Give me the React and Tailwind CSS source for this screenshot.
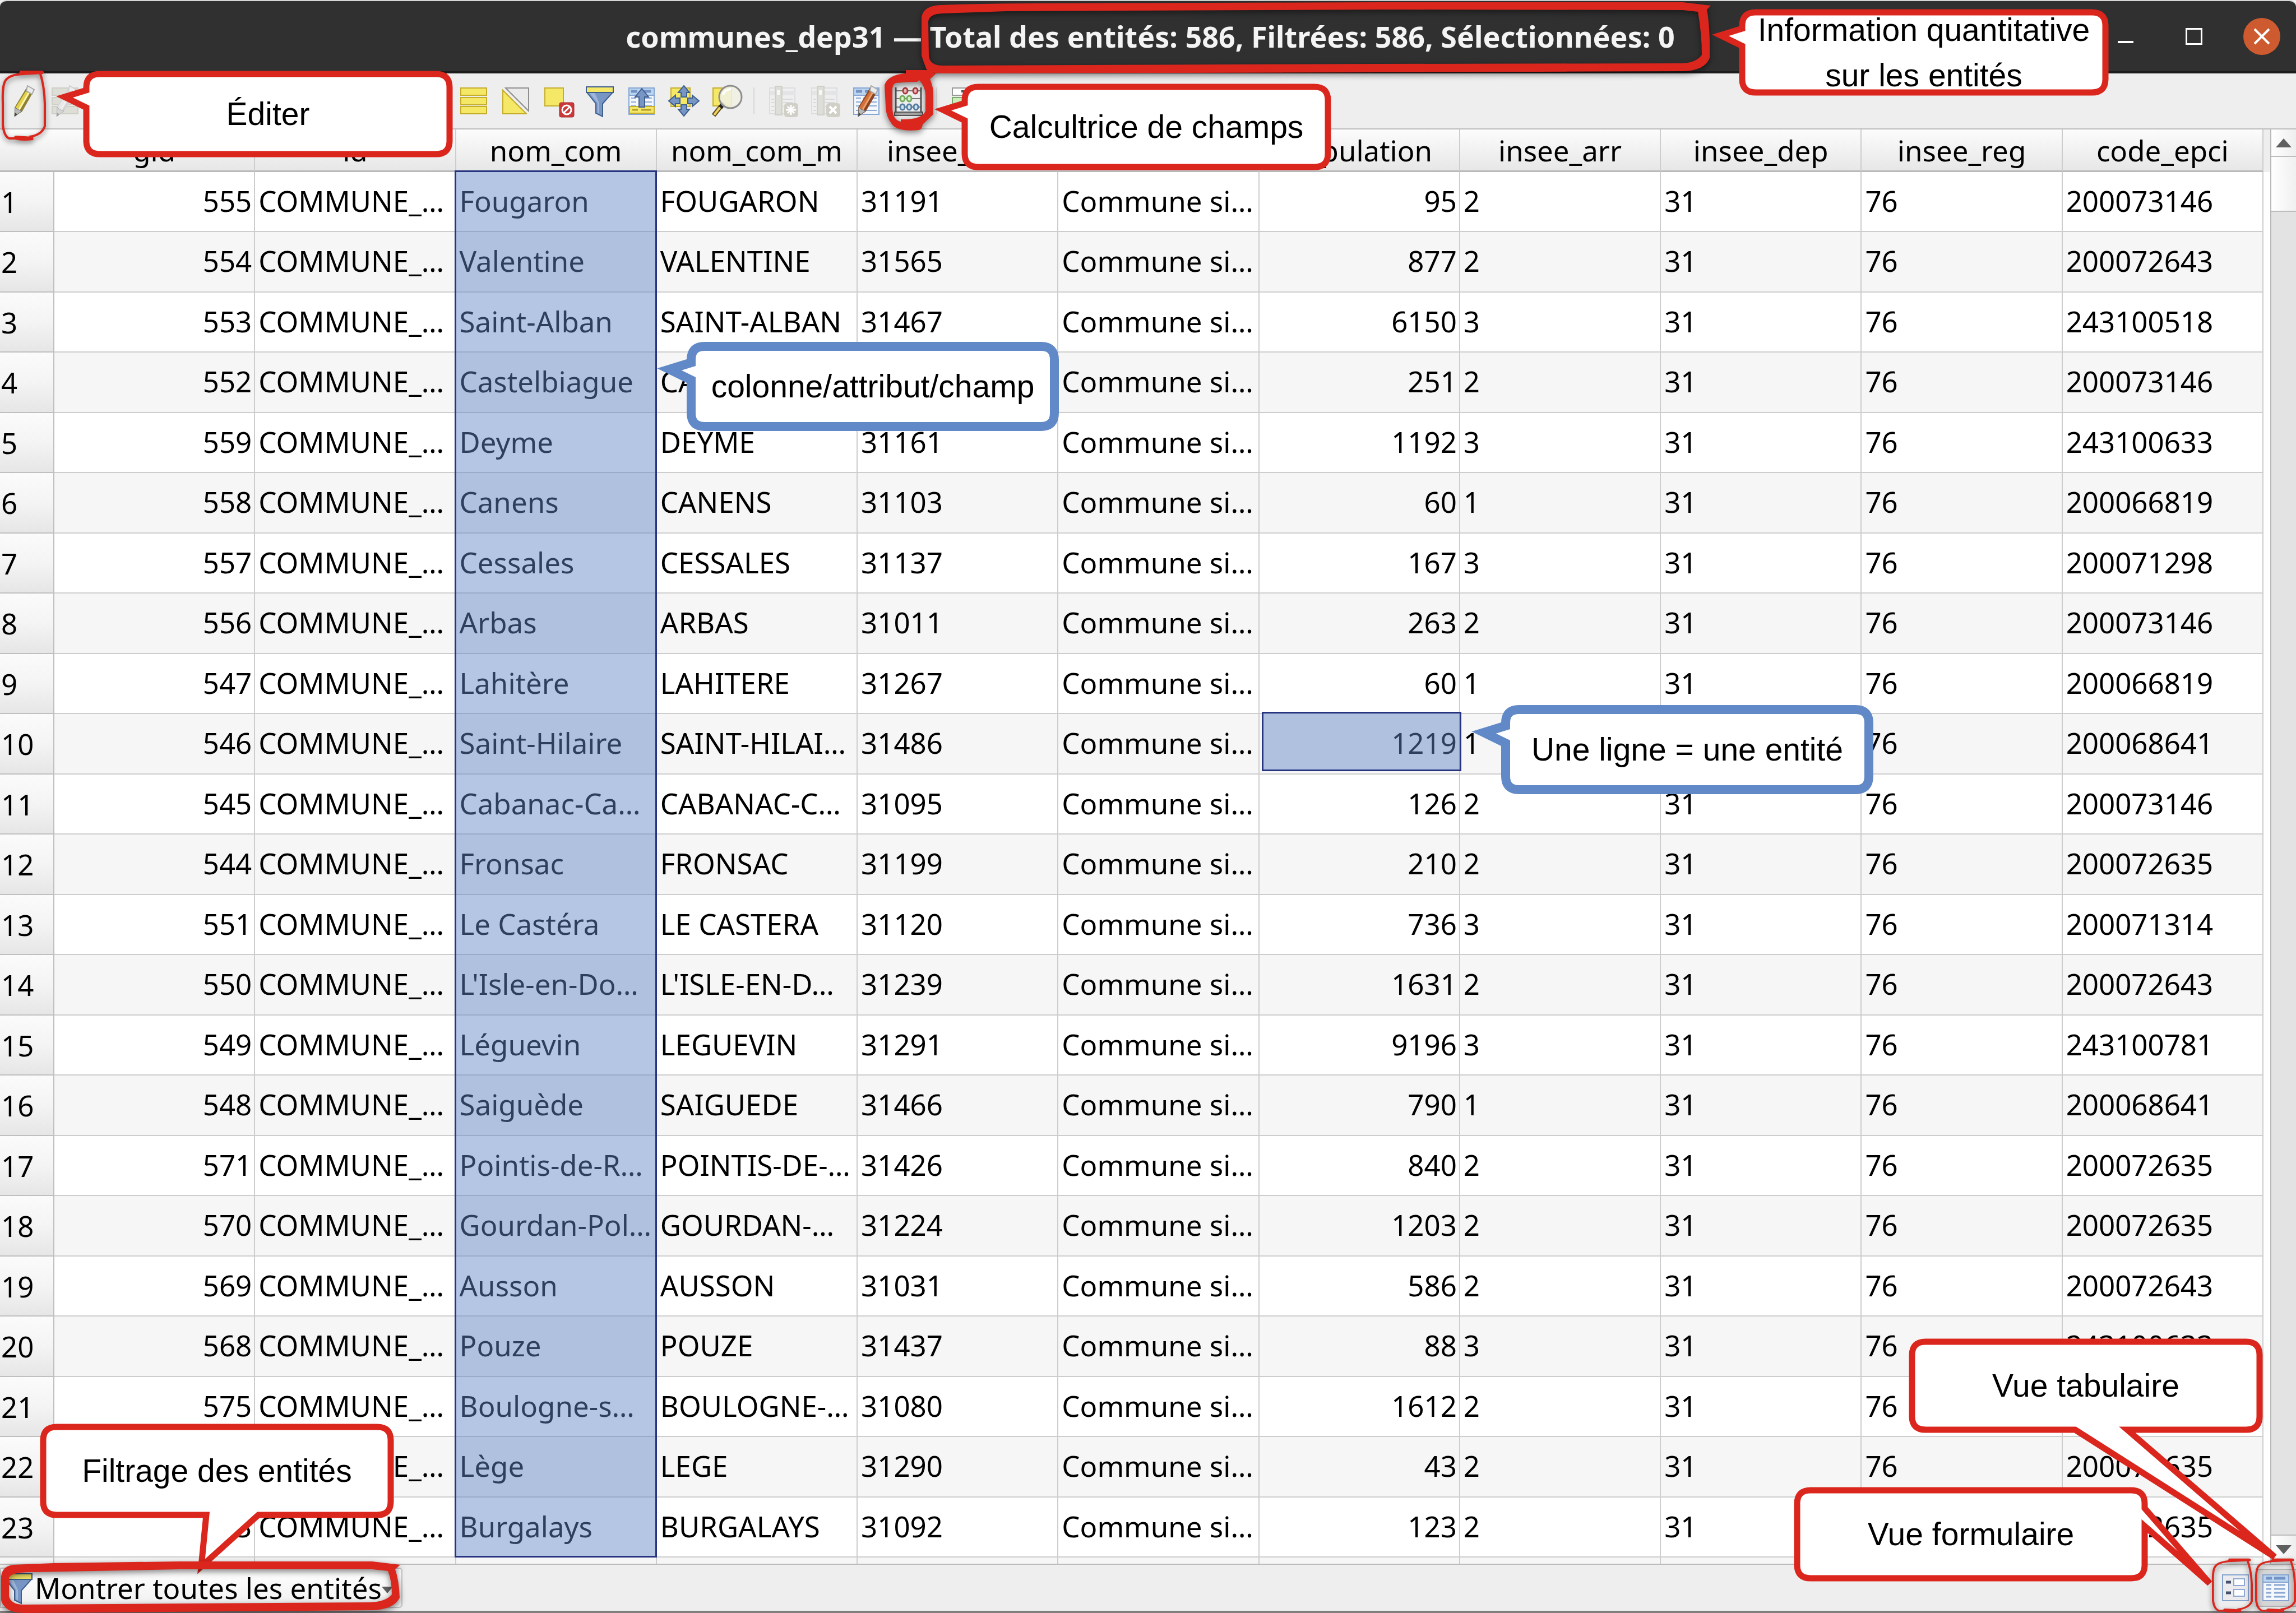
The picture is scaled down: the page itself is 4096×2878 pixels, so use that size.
const COLUMNS = [
  "gid",
  "id",
  "nom_com",
  "nom_com_m",
  "insee_com",
  "statut",
  "population",
  "insee_arr",
  "insee_dep",
  "insee_reg",
  "code_epci",
];

// gid, nom_com, nom_com_m, insee_com, population, insee_arr, code_epci
const ROWS = [
  [555, "Fougaron", "FOUGARON", "31191", 95, "2", "200073146"],
  [554, "Valentine", "VALENTINE", "31565", 877, "2", "200072643"],
  [553, "Saint-Alban", "SAINT-ALBAN", "31467", 6150, "3", "243100518"],
  [552, "Castelbiague", "CASTELBIA…", "31114", 251, "2", "200073146"],
  [559, "Deyme", "DEYME", "31161", 1192, "3", "243100633"],
  [558, "Canens", "CANENS", "31103", 60, "1", "200066819"],
  [557, "Cessales", "CESSALES", "31137", 167, "3", "200071298"],
  [556, "Arbas", "ARBAS", "31011", 263, "2", "200073146"],
  [547, "Lahitère", "LAHITERE", "31267", 60, "1", "200066819"],
  [546, "Saint-Hilaire", "SAINT-HILAI…", "31486", 1219, "1", "200068641"],
  [545, "Cabanac-Ca…", "CABANAC-C…", "31095", 126, "2", "200073146"],
  [544, "Fronsac", "FRONSAC", "31199", 210, "2", "200072635"],
  [551, "Le Castéra", "LE CASTERA", "31120", 736, "3", "200071314"],
  [550, "L'Isle-en-Do…", "L'ISLE-EN-D…", "31239", 1631, "2", "200072643"],
  [549, "Léguevin", "LEGUEVIN", "31291", 9196, "3", "243100781"],
  [548, "Saiguède", "SAIGUEDE", "31466", 790, "1", "200068641"],
  [571, "Pointis-de-R…", "POINTIS-DE-…", "31426", 840, "2", "200072635"],
  [570, "Gourdan-Pol…", "GOURDAN-…", "31224", 1203, "2", "200072635"],
  [569, "Ausson", "AUSSON", "31031", 586, "2", "200072643"],
  [568, "Pouze", "POUZE", "31437", 88, "3", "243100633"],
  [575, "Boulogne-s…", "BOULOGNE-…", "31080", 1612, "2", "200072635"],
  [574, "Lège", "LEGE", "31290", 43, "2", "200072635"],
  [573, "Burgalays", "BURGALAYS", "31092", 123, "2", "200072635"],
];

const YELLOW = "#f5e867";
const GOLD = "#c5ad2c";
const BLUE = "#7796c4";
const NAVY = "#3f5f8f";

function Icon({ children, className = "" }) {
  return (
    <svg viewBox="0 0 54 54" className={"size-[54px] shrink-0 overflow-visible " + className} aria-hidden="true">
      {children}
    </svg>
  );
}

function TableSheet() {
  return (
    <g>
      <rect x="4" y="4" width="45" height="47" fill="#f4f8fd" stroke="#86a6d6" strokeWidth="2" />
      <rect x="5" y="5" width="43" height="11" fill="#bcd5ef" />
      <path d="M8 10h11M24 10h19" stroke="#7393c6" strokeWidth="5" />
      <path d="M4 17h45" stroke="#86a6d6" strokeWidth="2" />
      <path d="M8 22h9M21 22h24M8 29h9M21 29h24M8 36h9M21 36h24M8 44h9M21 44h24" stroke="#8aa7d2" strokeWidth="2" />
    </g>
  );
}

function Pencil({ body, dark, light }) {
  return (
    <g>
      <path d="M34 3L46 9L25 46L12 54L13 38Z" fill={dark} stroke={dark} strokeWidth="1" />
      <path d="M32 10L39 13L20 44L13 40Z" fill={body} />
      <path d="M36 12L39 13L21 44L18 43Z" fill={light} />
      <path d="M33 9L35 0L47 7L43 15Z" fill="#ececec" stroke="#a9a9a9" strokeWidth="2" />
      <path d="M13 38L17 42L25 45L12 55Z" fill="#b9b9b9" stroke="#6d6d6d" strokeWidth="1" />
      <path d="M12 55L13 48L17 51Z" fill="#444" />
    </g>
  );
}

function EditIcon() {
  return (
    <Icon>
      <Pencil body="#e3d14a" dark="#8f8030" light="#fbf6ae" />
    </Icon>
  );
}

function SaveEditsIcon() {
  return (
    <Icon>
      <g opacity="0.45">
        <path d="M4 4h46v13H4zM4 21h46v13H4zM4 37h46v13H4z" fill="#c9cbb8" stroke="#a9ab98" strokeWidth="2" />
        <Pencil body="#e2e2e2" dark="#b5b5b5" light="#f4f4f4" />
      </g>
    </Icon>
  );
}

function SelectAllIcon() {
  return (
    <Icon>
      <path d="M4 4h46v13H4zM4 21h46v13H4zM4 37h46v13H4z" fill={YELLOW} stroke={GOLD} strokeWidth="2" />
    </Icon>
  );
}

function InvertIcon() {
  return (
    <Icon>
      <path d="M4 8L46 50H4z" fill={YELLOW} stroke={GOLD} strokeWidth="2" />
      <path d="M9 4H50V45z" fill="#ebebeb" stroke="#8f8f8f" strokeWidth="2" />
    </Icon>
  );
}

function DeselectIcon() {
  return (
    <Icon>
      <rect x="4" y="4" width="33" height="32" fill={YELLOW} stroke={GOLD} strokeWidth="2" />
      <rect x="30" y="30" width="26" height="26" rx="3" fill="#c9393a" stroke="#a92a2c" strokeWidth="1" />
      <circle cx="43" cy="43" r="8" fill="none" stroke="#fff" strokeWidth="3" />
      <path d="M38 48L48 38" stroke="#fff" strokeWidth="3" />
    </Icon>
  );
}

function FunnelIcon({ className }) {
  return (
    <Icon className={className}>
      <path d="M4 12L20 32V49L32 55V32L50 12z" fill={BLUE} stroke={NAVY} strokeWidth="2" />
      <path d="M9 13L23 31V48L26 50V31L18 13z" fill="#9fb6da" />
      <rect x="3" y="2" width="48" height="10" fill={YELLOW} stroke={NAVY} strokeWidth="2" />
    </Icon>
  );
}

function MoveTopIcon() {
  return (
    <Icon>
      <TableSheet />
      <rect x="5" y="37" width="44" height="12" fill={YELLOW} stroke={GOLD} strokeWidth="2" />
      <path d="M10 43h10M26 43h18" stroke="#b39b2b" strokeWidth="3" />
      <path d="M27 5L39 20L32 20V38H22V20L15 20z" fill={BLUE} stroke={NAVY} strokeWidth="2" />
    </Icon>
  );
}

function PanIcon() {
  return (
    <Icon>
      <rect x="4" y="4" width="34" height="33" fill={YELLOW} stroke={GOLD} strokeWidth="2" />
      <g fill={BLUE} stroke={NAVY} strokeWidth="2">
        <path d="M27 0L37 12H32V20H22V12H17z" />
        <path d="M27 54L37 42H32V34H22V42H17z" />
        <path d="M0 27L12 17V22H20V32H12V37z" />
        <path d="M54 27L42 17V22H34V32H42V37z" />
      </g>
    </Icon>
  );
}

function ZoomIcon() {
  return (
    <Icon>
      <rect x="4" y="4" width="33" height="32" fill={YELLOW} stroke={GOLD} strokeWidth="2" />
      <path d="M18 37L5 53" stroke="#5b4a1c" strokeWidth="8" />
      <path d="M17 38L6 52" stroke="#f0d35e" strokeWidth="4" />
      <path d="M23 31L17 39" stroke="#222" strokeWidth="8" />
      <circle cx="35" cy="20" r="20" fill="#f0f0e2" fillOpacity="0.88" stroke="#8d8d8d" strokeWidth="3" />
      <path d="M22 16a14 14 0 0 1 14-10" stroke="#fff" strokeWidth="4" fill="none" />
    </Icon>
  );
}

function GreyColumnIcon({ kind }) {
  return (
    <Icon>
      <g opacity="0.6">
        <rect x="4" y="4" width="45" height="46" fill="#f1f1f1" stroke="#cfd2d6" strokeWidth="2" />
        <path d="M5 9h44v8H5z" fill="#dcdfe2" />
        <path d="M28 24h17M28 30h17M28 37h10M7 24h5M7 30h5M7 37h5M7 44h5" stroke="#c9ccd0" strokeWidth="2" />
        <rect x="14" y="1" width="12" height="51" fill="#d5d5ca" stroke="#bcbcb0" strokeWidth="2" />
        <rect x="17" y="8" width="5" height="8" fill="#fff" />
        <rect x="30" y="31" width="25" height="25" rx="5" fill="#bdbdae" />
      </g>
      {kind === "new" ? (
        <path d="M42 34v18M33 43h18M36 37l12 12M48 37L36 49" stroke="#fff" strokeWidth="3" />
      ) : (
        <path d="M36 37l12 12M48 37L36 49" stroke="#fff" strokeWidth="4" />
      )}
    </Icon>
  );
}

function EditTableIcon() {
  return (
    <Icon>
      <TableSheet />
      <Pencil body="#d3713a" dark="#8a4320" light="#eda06d" />
    </Icon>
  );
}

function AbacusIcon() {
  return (
    <Icon>
      <path d="M4 9h46M4 23h46M4 38h46" stroke="#777" strokeWidth="2" />
      <path d="M4 3v45M49 3v45" stroke="#555" strokeWidth="3" />
      <rect x="2" y="47" width="50" height="6" fill="#a5a5a5" stroke="#555" strokeWidth="2" />
      <g strokeWidth="3" fill="#f0b6b6" stroke="#a83a3c">
        <ellipse cx="21" cy="9" rx="4" ry="5" />
        <ellipse cx="39" cy="9" rx="4" ry="5" />
      </g>
      <g strokeWidth="3" fill="#d5f3c8" stroke="#74ab5e">
        <ellipse cx="16" cy="23" rx="4" ry="5" />
        <ellipse cx="28" cy="23" rx="4" ry="5" />
      </g>
      <g strokeWidth="3" fill="#d0e3f2" stroke="#557da0">
        <ellipse cx="16" cy="38" rx="4" ry="5" />
        <ellipse cx="28" cy="38" rx="4" ry="5" />
        <ellipse cx="40" cy="38" rx="4" ry="5" />
      </g>
    </Icon>
  );
}

function ConditionalIcon() {
  return (
    <Icon>
      <rect x="4" y="4" width="46" height="13" fill="#fff" stroke="#999" strokeWidth="2" />
      <path d="M20 10h25" stroke="#555" strokeWidth="4" />
      <rect x="4" y="21" width="46" height="13" fill="#cdeeba" stroke="#7aa869" strokeWidth="2" />
      <rect x="4" y="37" width="46" height="13" fill="#fff" stroke="#999" strokeWidth="2" />
    </Icon>
  );
}

function FormViewIcon() {
  return (
    <svg viewBox="0 0 48 48" className="size-12" aria-hidden="true">
      <rect x="1" y="1" width="46" height="46" fill="#ececef" stroke="#86a3d0" strokeWidth="2" />
      <path d="M7 14h9M7 33h9" stroke="#44536d" strokeWidth="5" />
      <rect x="21" y="8" width="19" height="12" fill="#fff" stroke="#8fa9d3" strokeWidth="2" />
      <rect x="21" y="27" width="19" height="12" fill="#fff" stroke="#8fa9d3" strokeWidth="2" />
    </svg>
  );
}

function TableViewIcon() {
  return (
    <svg viewBox="0 0 48 48" className="size-12" aria-hidden="true">
      <rect x="1" y="1" width="46" height="46" fill="#f4f8fd" stroke="#86a3d0" strokeWidth="2" />
      <rect x="2" y="2" width="44" height="12" fill="#bcd5ef" />
      <path d="M7 7h10M21 7h20" stroke="#7393c6" strokeWidth="5" />
      <path d="M2 14h44" stroke="#86a3d0" strokeWidth="2" />
      <path d="M7 19h9M21 19h20M7 26h9M21 26h20M7 33h9M21 33h20M7 40h9M21 40h20" stroke="#8aa7d2" strokeWidth="3" />
    </svg>
  );
}

function Tool({ label, children }) {
  return (
    <button type="button" aria-label={label} className="flex h-full w-[75px] shrink-0 items-center justify-center">
      {children}
    </button>
  );
}

function Separator() {
  return (
    <div className="flex w-[26px] shrink-0 justify-center">
      <div className="h-12 w-[2px] bg-[#d9d9d9]" />
    </div>
  );
}

// Outline of a speech bubble: a rounded rectangle whose one side opens into a pointed tail.
function bubblePath(w, h, side, from, to, tip) {
  const r = 24;
  const t = `L${tip[0]} ${tip[1]}`;
  const right = side === "right" ? `V${from}${t}L${w} ${to}` : "";
  const bottom = side === "bottom" ? `H${to}${t}L${from} ${h}` : "";
  const left = side === "left" ? `V${to}${t}L0 ${from}` : "";
  return (
    `M${r} 0H${w - r}Q${w} 0 ${w} ${r}${right}V${h - r}Q${w} ${h} ${w - r} ${h}` +
    `${bottom}H${r}Q0 ${h} 0 ${h - r}${left}V${r}Q0 0 ${r} 0Z`
  );
}

function Callout({ place, w, h, side, from, to, tip, tone = "red", children }) {
  return (
    <div className={"absolute z-10 flex items-center justify-center " + place}>
      <svg className="absolute inset-0 size-full overflow-visible" aria-hidden="true">
        <path
          d={bubblePath(w, h, side, from, to, tip)}
          fill="#fff"
          stroke={tone === "red" ? "#db261d" : "#6188c7"}
          strokeWidth={tone === "red" ? 11 : 16}
        />
      </svg>
      <p className="relative text-center font-['Liberation_Sans',Arial,sans-serif] text-[57px] leading-[81px] whitespace-nowrap text-black">
        {children}
      </p>
    </div>
  );
}

function SmallRing({ place }) {
  return (
    <svg
      viewBox="0 0 76 126"
      preserveAspectRatio="none"
      className={"pointer-events-none absolute z-20 overflow-visible drop-shadow-[0_4px_5px_rgba(0,0,0,0.5)] " + place}
      aria-hidden="true"
    >
      <path
        d="M38 7Q10 8 5 22Q1 32 2 60V98Q4 118 13 122L28 122M48 119Q70 116 75 100V60Q74 28 67 6"
        fill="none"
        stroke="#db261d"
        strokeWidth="4"
      />
      <path d="M32 1H70Q76 3 72 7L38 9L30 6zM24 117L55 119V125Q30 128 18 122z" fill="#db261d" />
    </svg>
  );
}

function Rings() {
  return (
    <svg
      className="pointer-events-none absolute inset-0 z-20 size-full overflow-visible drop-shadow-[0_4px_6px_rgba(0,0,0,0.5)]"
      aria-hidden="true"
    >
      <g fill="#db261d" fillRule="evenodd">
        <path d="M1644 30Q1648 10 1678 9Q1760 6 1852 6L2462 4H3002L3052 10L3045 17Q3051 50 3050 103Q3042 126 3002 127L2462 129L1681 131Q1657 131 1652 122Q1644 100 1644 98ZM1656 39Q1657 25 1681 24L1795 20L2462 17L3002 18L3029 21Q3036 60 3036 98Q3026 112 3000 113L2462 114L1684 117Q1660 118 1657 101Z" />
        <path d="M1616 125H1659L1669 132L1659 141Q1665 155 1665 167V204L1646 222Q1645 231 1639 232Q1600 236 1590 220Q1580 206 1580 190L1578 152Q1584 133 1616 131ZM1598 148Q1620 146 1636 146L1640 143Q1651 155 1651 170V198Q1645 214 1607 213V217Q1592 214 1592 191V158Q1593 150 1598 148Z" />
        <path d="M2 2813Q4 2794 24 2792L96 2789L320 2786H664L714 2792L705 2800Q712 2820 713 2851Q702 2872 664 2873L48 2878Q18 2878 10 2868Q2 2860 2 2854ZM16 2848V2815Q20 2804 64 2805L320 2800H664L692 2803Q699 2820 699 2845Q688 2858 660 2859L44 2863Q20 2864 16 2848Z" />
      </g>
    </svg>
  );
}

const cell = "border-r-2 border-b-2 border-[#cdcdcd] p-0 pb-1 pl-[6px] font-normal";

export default function App() {
  return (
    <div className="relative flex min-h-screen w-full flex-col overflow-hidden bg-[#eeeeee] font-['Noto_Sans','Open_Sans',sans-serif] text-[51px] leading-[72px] text-black">
      <header className="relative flex h-[131px] items-center justify-center rounded-t-xl border-t-2 border-b-4 border-t-[#d5d5d5] border-b-[#1c1c1c] bg-[#303030]">
        <h1 className="pl-2 text-[52px] font-bold whitespace-nowrap text-[#f4f4f4]">
          communes_dep31 — Total des entités: 586, Filtrées: 586, Sélectionnées: 0
        </h1>
        <div className="absolute right-7 flex h-full items-center gap-[54px]">
          <button type="button" aria-label="Réduire" className="flex w-[68px] items-center justify-center pt-5">
            <span className="h-1 w-7 bg-white" />
          </button>
          <button type="button" aria-label="Agrandir" className="flex w-[68px] items-center justify-center">
            <span className="size-[30px] border-[3px] border-white" />
          </button>
          <button type="button" aria-label="Fermer" className="flex size-[66px] items-center justify-center rounded-full bg-[#cd5b2f]">
            <svg viewBox="0 0 30 30" className="size-[30px]" aria-hidden="true">
              <path d="M2 2L28 28M28 2L2 28" stroke="#fff" strokeWidth="4" />
            </svg>
          </button>
        </div>
      </header>

      <nav aria-label="Outils" className="flex h-[100px] items-center border-b-2 border-[#bdbdbd] pl-[3px]">
        <Tool label="Éditer"><EditIcon /></Tool>
        <Tool label="Enregistrer"><SaveEditsIcon /></Tool>
        <div className="w-[654px] shrink-0" />
        <Tool label="Tout sélectionner"><SelectAllIcon /></Tool>
        <Tool label="Inverser la sélection"><InvertIcon /></Tool>
        <Tool label="Tout désélectionner"><DeselectIcon /></Tool>
        <Tool label="Filtrer"><FunnelIcon /></Tool>
        <Tool label="Sélection en haut"><MoveTopIcon /></Tool>
        <Tool label="Centrer sur la sélection"><PanIcon /></Tool>
        <Tool label="Zoomer sur la sélection"><ZoomIcon /></Tool>
        <Separator />
        <Tool label="Nouveau champ"><GreyColumnIcon kind="new" /></Tool>
        <Tool label="Supprimer le champ"><GreyColumnIcon kind="delete" /></Tool>
        <Tool label="Organiser les colonnes"><EditTableIcon /></Tool>
        <Tool label="Calculatrice de champs"><AbacusIcon /></Tool>
        <Separator />
        <Tool label="Formatage conditionnel"><ConditionalIcon /></Tool>
      </nav>

      <main className="flex flex-1">
        <div className="min-w-0 flex-1 bg-white">
          <table className="w-full table-fixed border-separate border-spacing-0 whitespace-nowrap">
            <colgroup>
              <col className="w-[97px]" />
              {COLUMNS.map((name) => (
                <col key={name} />
              ))}
            </colgroup>
            <thead>
              <tr className="h-[76px] bg-linear-to-b from-[#fcfcfc] via-[#f1f1f1] to-[#e6e6e6]">
                <td className="border-b-[3px] border-[#b9b9b9] p-0" />
                {COLUMNS.map((name) => (
                  <th key={name} scope="col" className="relative border-r-2 border-b-[3px] border-r-[#cdcdcd] border-b-[#b9b9b9] p-0 font-normal">
                    {name}
                    {name === "nom_com" && (
                      <div className="absolute top-full -right-[2px] -left-[3px] h-[2475px] border-[3px] border-[#26337f] bg-[rgba(98,134,200,0.47)]" />
                    )}
                  </th>
                ))}
              </tr>
            </thead>
            <tbody>
              {ROWS.map(([gid, name, upper, insee, population, arr, epci], i) => (
                <tr key={gid} className="h-[107px] bg-white even:h-[108px] even:bg-[#f6f6f6]">
                  <th scope="row" className="border-r-2 border-b-2 border-[#bfbfbf] bg-linear-to-b from-[#fbfbfb] via-[#f4f4f4] to-[#e6e6e6] p-0 pl-[2px] text-left font-normal">
                    {i + 1}
                  </th>
                  <td className={cell + " pr-1 text-right"}>{gid}</td>
                  <td className={cell}>COMMUNE_…</td>
                  <td className={cell}>{name}</td>
                  <td className={cell}>{upper}</td>
                  <td className={cell}>{insee}</td>
                  <td className={cell}>Commune si…</td>
                  <td className={cell + " relative pr-1 text-right"}>
                    {population}
                    {population === 1219 && (
                      <div className="absolute -top-1 -right-1 bottom-1 left-1 border-[3px] border-[#26337f] bg-[rgba(98,134,200,0.47)]" />
                    )}
                  </td>
                  <td className={cell}>{arr}</td>
                  <td className={cell}>31</td>
                  <td className={cell}>76</td>
                  <td className={cell}>{epci}</td>
                </tr>
              ))}
              <tr className="h-[11px] bg-[#f6f6f6]">
                <th className="border-r-2 border-[#bfbfbf] p-0" />
                {COLUMNS.map((name) => (
                  <td key={name} className="border-r-2 border-[#cdcdcd] p-0" />
                ))}
              </tr>
            </tbody>
          </table>
        </div>
        <div className="w-3 bg-white">
          <div className="h-[76px] bg-[#eeeeee]" />
        </div>
        <div className="flex w-[46px] flex-col border-l-2 border-[#b9b9b9] bg-[#e3e3e3]">
          <button type="button" aria-label="Défiler vers le haut" className="flex h-[49px] items-center justify-center border-b-2 border-[#bdbdbd] bg-linear-to-r from-white to-[#eeeeee]">
            <svg viewBox="0 0 28 16" className="h-4 w-7" aria-hidden="true"><path d="M14 0L28 16H0z" fill="#5f5f5f" /></svg>
          </button>
          <div className="h-[98px] border-b-2 border-[#bdbdbd] bg-linear-to-r from-white to-[#f0f0f0]" />
          <div className="flex-1" />
          <button type="button" aria-label="Défiler vers le bas" className="flex h-[52px] items-center justify-center border-t-2 border-[#bdbdbd] bg-linear-to-r from-white to-[#eeeeee]">
            <svg viewBox="0 0 28 16" className="h-4 w-7" aria-hidden="true"><path d="M0 0H28L14 16z" fill="#5f5f5f" /></svg>
          </button>
        </div>
      </main>

      <footer className="flex h-[88px] items-center justify-between border-t-2 border-b-4 border-t-[#bdbdbd] border-b-[#7f7f7f]">
        <button type="button" className="flex h-[72px] w-[718px] items-center rounded-r-md border-2 border-[#c3c3c3] bg-linear-to-b from-white to-[#f0f0f0] pl-1 whitespace-nowrap">
          <FunnelIcon />
          <span className="pl-[2px]">Montrer toutes les entités</span>
          <svg viewBox="0 0 20 12" className="mt-2 h-3 w-5" aria-hidden="true"><path d="M0 0H20L10 12z" fill="#5f5f5f" /></svg>
        </button>
        <div className="flex">
          <button type="button" aria-label="Vue formulaire" className="flex h-[68px] w-[72px] items-center justify-center">
            <FormViewIcon />
          </button>
          <button type="button" aria-label="Vue tabulaire" className="flex h-[68px] w-[72px] items-center justify-center border-y-2 border-[#b3b3b3] bg-[#d6d6d6]">
            <TableViewIcon />
          </button>
        </div>
      </footer>

      <Callout place="left-[154px] top-[132px] h-[143px] w-[648px]" w={648} h={143} side="left" from={29} to={60} tip={[-39, 41]}>
        Éditer
      </Callout>
      <Callout place="left-[1721px] top-[155px] h-[143px] w-[648px]" w={648} h={143} side="left" from={29} to={60} tip={[-39, 41]}>
        Calcultrice de champs
      </Callout>
      <Callout place="left-[3108px] top-[22px] h-[143px] w-[648px]" w={648} h={143} side="left" from={29} to={60} tip={[-39, 41]}>
        Information quantitative
        <br />
        sur les entités
      </Callout>
      <Callout tone="blue" place="left-[1233px] top-[618px] h-[143px] w-[648px]" w={648} h={143} side="left" from={29} to={60} tip={[-39, 41]}>
        colonne/attribut/champ
      </Callout>
      <Callout tone="blue" place="left-[2686px] top-[1266px] h-[143px] w-[648px]" w={648} h={143} side="left" from={29} to={60} tip={[-39, 41]}>
        Une ligne = une entité
      </Callout>
      <Callout place="left-[77px] top-[2546px] h-[157px] w-[620px]" w={620} h={157} side="bottom" from={291} to={384} tip={[282, 249]}>
        Filtrage des entités
      </Callout>
      <Callout place="left-[3411px] top-[2394px] h-[157px] w-[620px]" w={620} h={157} side="bottom" from={291} to={384} tip={[647, 384]}>
        Vue tabulaire
      </Callout>
      <Callout place="left-[3206px] top-[2659px] h-[157px] w-[620px]" w={620} h={157} side="right" from={32} to={64} tip={[736, 166]}>
        Vue formulaire
      </Callout>

      <Rings />
      <SmallRing place="left-[3px] top-[125px] h-[126px] w-[78px]" />
      <SmallRing place="left-[3946px] top-[2780px] h-[97px] w-[72px]" />
      <SmallRing place="left-[4023px] top-[2780px] h-[97px] w-[72px]" />
    </div>
  );
}
